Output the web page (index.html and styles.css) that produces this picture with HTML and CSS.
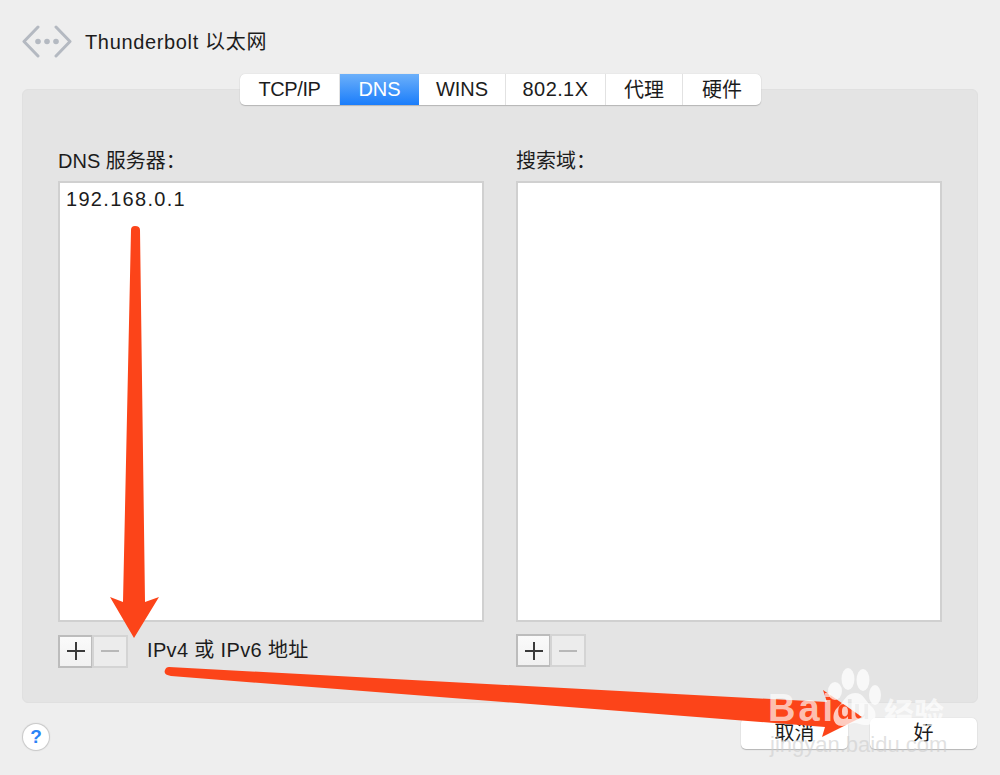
FILE: index.html
```html
<!DOCTYPE html>
<html>
<head>
    <meta charset="UTF-8">
    <link rel="stylesheet" href="styles.css">
    <title>Thunderbolt 以太网</title>
</head>
<body>
    <!-- title row -->
    <div class="header">
        <svg class="nav-icon" width="50" height="34" viewBox="0 0 50 34">
            <path d="M16 2 L2 16.5 L16 31" fill="none" stroke="#b4b9c1" stroke-width="3" stroke-linecap="round" stroke-linejoin="round"/>
            <path d="M34 2 L48 16.5 L34 31" fill="none" stroke="#b4b9c1" stroke-width="3" stroke-linecap="round" stroke-linejoin="round"/>
            <circle cx="16" cy="16.5" r="2.8" fill="#b4b9c1"/>
            <circle cx="25" cy="16.5" r="2.8" fill="#b4b9c1"/>
            <circle cx="34" cy="16.5" r="2.8" fill="#b4b9c1"/>
        </svg>
        <span class="title">Thunderbolt 以太网</span>
    </div>

    <!-- tabs sit across the top edge of the panel -->
    <div class="tabs">
        <div class="tab tab-tcp">TCP/IP</div>
        <div class="tab tab-dns active">DNS</div>
        <div class="tab tab-wins">WINS</div>
        <div class="tab tab-8021x">802.1X</div>
        <div class="tab tab-proxy">代理</div>
        <div class="tab tab-hw">硬件</div>
    </div>

    <div class="panel">
        <div class="column">
            <div class="label">DNS 服务器：</div>
            <div class="list"><div class="list-item">192.168.0.1</div></div>
            <div class="tools">
                <div class="stepper">
                    <div class="step step-add"><span class="plus"></span></div>
                    <div class="step step-remove"><span class="minus"></span></div>
                </div>
                <span class="hint">IPv4 或 IPv6 地址</span>
            </div>
        </div>
        <div class="column">
            <div class="label">搜索域：</div>
            <div class="list"></div>
            <div class="tools">
                <div class="stepper">
                    <div class="step step-add"><span class="plus"></span></div>
                    <div class="step step-remove"><span class="minus"></span></div>
                </div>
            </div>
        </div>
    </div>

    <!-- bottom buttons -->
    <div class="footer">
        <div class="help">?</div>
        <div class="actions">
            <div class="btn">取消</div>
            <div class="btn">好</div>
        </div>
    </div>

    <!-- red arrows drawn over the screenshot -->
    <svg class="arrows" width="1000" height="775" viewBox="0 0 1000 775">
        <path d="M131 230 Q131 226 135 226 Q140 226 140 230 L145 602 L159 597 L134 638 L110 597 L123 602 Z" fill="#fc4419"/>
        <path d="M169 667 L827 702 L823 690 L862 717 L822 737 L825 727 L171 676 Q163 675 165 670 Q166 667 169 667 Z" fill="#fc4419"/>
    </svg>

    <!-- watermark -->
    <div class="watermark">
        <svg class="paw" width="58" height="62" viewBox="0 0 58 62">
            <mask id="pad-cut">
                <rect width="58" height="62" fill="#fff"/>
                <text class="wm-du" x="11" y="53">du</text>
            </mask>
            <ellipse cx="9" cy="25" rx="7" ry="9"/>
            <ellipse cx="22" cy="13" rx="6.5" ry="11"/>
            <ellipse cx="37" cy="14" rx="6.5" ry="11"/>
            <ellipse cx="49" cy="29" rx="6" ry="10"/>
            <path mask="url(#pad-cut)" d="M29 27 C38 27 39 35 45 40 C53 46 50 60 39 59 C35 59 32 57 28 57 C24 57 21 60 16 60 C6 60 5 47 12 41 C18 36 20 27 29 27 Z"/>
        </svg>
        <span class="wm-bai">Bai</span>
        <span class="wm-cn">经验</span>
        <span class="wm-url">jingyan.baidu.com</span>
    </div>
</body>
</html>
```

FILE: styles.css
```css
* {
    box-sizing: border-box;
}
html, body {
    margin: 0;
    height: 775px;
    overflow: hidden;
}
body {
    position: relative;
    background: #eeeeee;
    color: #1c1c1c;
    font-family: "Liberation Sans", "Noto Sans CJK SC", sans-serif;
    font-size: 20px;
}
.header {
    display: flex;
    align-items: center;
    height: 34px;
    margin: 25px 0 0 22px;
}
.nav-icon {
    flex: none;
}
.title {
    margin-left: 13px;
    padding-bottom: 4px;
    letter-spacing: 0.65px;
}

/* tabs */
.tabs {
    position: relative;
    z-index: 2;
    display: flex;
    width: 521px;
    height: 31px;
    margin: 15px 0 -16px 240px;
    background: #fff;
    border-radius: 5px;
    box-shadow: 0 1px 1px #b5b5b5, 0 0 1px #c4c4c4;
    overflow: hidden;
}
.tab {
    display: flex;
    align-items: center;
    justify-content: center;
    border-right: 1px solid #e2e2e2;
}
.tab-tcp { width: 100px; letter-spacing: -0.4px; }
.tab-dns { width: 79px; }
.tab-wins { width: 87px; }
.tab-8021x { width: 100px; letter-spacing: 0.4px; }
.tab-proxy { width: 77px; padding-bottom: 2px; }
.tab-hw { width: 78px; padding-bottom: 2px; border-right: 0; }
.tab.active {
    background: linear-gradient(#6cb0fa, #1a7dfb);
    color: #fff;
    border-right: 0;
}

/* main panel */
.panel {
    display: flex;
    gap: 32px;
    width: 956px;
    height: 614px;
    margin-left: 22px;
    padding: 60px 35px 0;
    background: #e4e4e4;
    border: 1px solid #e0e0e0;
    border-radius: 6px;
}
.column {
    width: 426px;
}
.label {
    height: 31px;
    line-height: 22px;
}
.list {
    height: 441px;
    background: #fff;
    border: 2px solid #d0d0d0;
}
.list-item {
    padding: 4px 6px;
    line-height: 24px;
    letter-spacing: 1.3px;
}
.tools {
    display: flex;
    align-items: center;
    margin-top: 12px;
}
.stepper {
    display: flex;
    flex: none;
}
.step {
    display: flex;
    align-items: center;
    justify-content: center;
    width: 35px;
    height: 33px;
    border: 2px solid #c9c9c9;
}
.step-add {
    background: linear-gradient(#fafafa, #f1f1f1);
    border-color: #bcbcbc;
}
.step-remove {
    width: 36px;
    margin-left: -1px;
    background: #ececec;
    border-color: #d4d4d4;
}
.plus {
    position: relative;
    width: 18px;
    height: 2px;
    background: #3a3a3a;
}
.plus::after {
    content: "";
    position: absolute;
    left: 8px;
    top: -8px;
    width: 2px;
    height: 18px;
    background: #3a3a3a;
}
.minus {
    width: 18px;
    height: 2px;
    background: #b8b8b8;
}
.hint {
    margin-left: 19px;
    padding-bottom: 5px;
    letter-spacing: 0.35px;
}

/* footer */
.footer {
    display: flex;
    align-items: flex-start;
    justify-content: space-between;
    margin: 15px 23px 0 23px;
}
.help {
    width: 26px;
    height: 26px;
    margin-top: 6px;
    border-radius: 50%;
    background: #fff;
    box-shadow: 0 0 1px 1px #c6c6c6;
    color: #2a83f7;
    font-size: 19px;
    font-weight: bold;
    line-height: 26px;
    text-align: center;
}
.actions {
    display: flex;
    gap: 22px;
}
.btn {
    width: 107px;
    height: 31px;
    background: #fff;
    border-radius: 5px;
    box-shadow: 0 1px 1px #b5b5b5, 0 0 1px #c4c4c4;
    line-height: 31px;
    text-align: center;
}

/* overlays */
.arrows {
    position: absolute;
    left: 0;
    top: 0;
    z-index: 3;
}
.watermark {
    position: absolute;
    left: 0;
    top: 0;
    z-index: 4;
    width: 1000px;
    height: 775px;
    color: rgba(255, 255, 255, 0.68);
}
.watermark span {
    position: absolute;
    white-space: nowrap;
}
.paw {
    position: absolute;
    left: 826px;
    top: 666px;
    fill: rgba(255, 255, 255, 0.72);
}
.wm-bai {
    left: 768px;
    top: 687px;
    font-size: 38px;
    font-weight: bold;
    letter-spacing: 3px;
}
.wm-du {
    font-size: 27px;
    font-weight: bold;
    fill: #000;
}
.wm-cn {
    left: 884px;
    top: 689px;
    font-size: 30px;
    font-weight: bold;
}
.wm-url {
    left: 770px;
    top: 732px;
    font-size: 22px;
    color: rgba(205, 205, 205, 0.6);
}
```
